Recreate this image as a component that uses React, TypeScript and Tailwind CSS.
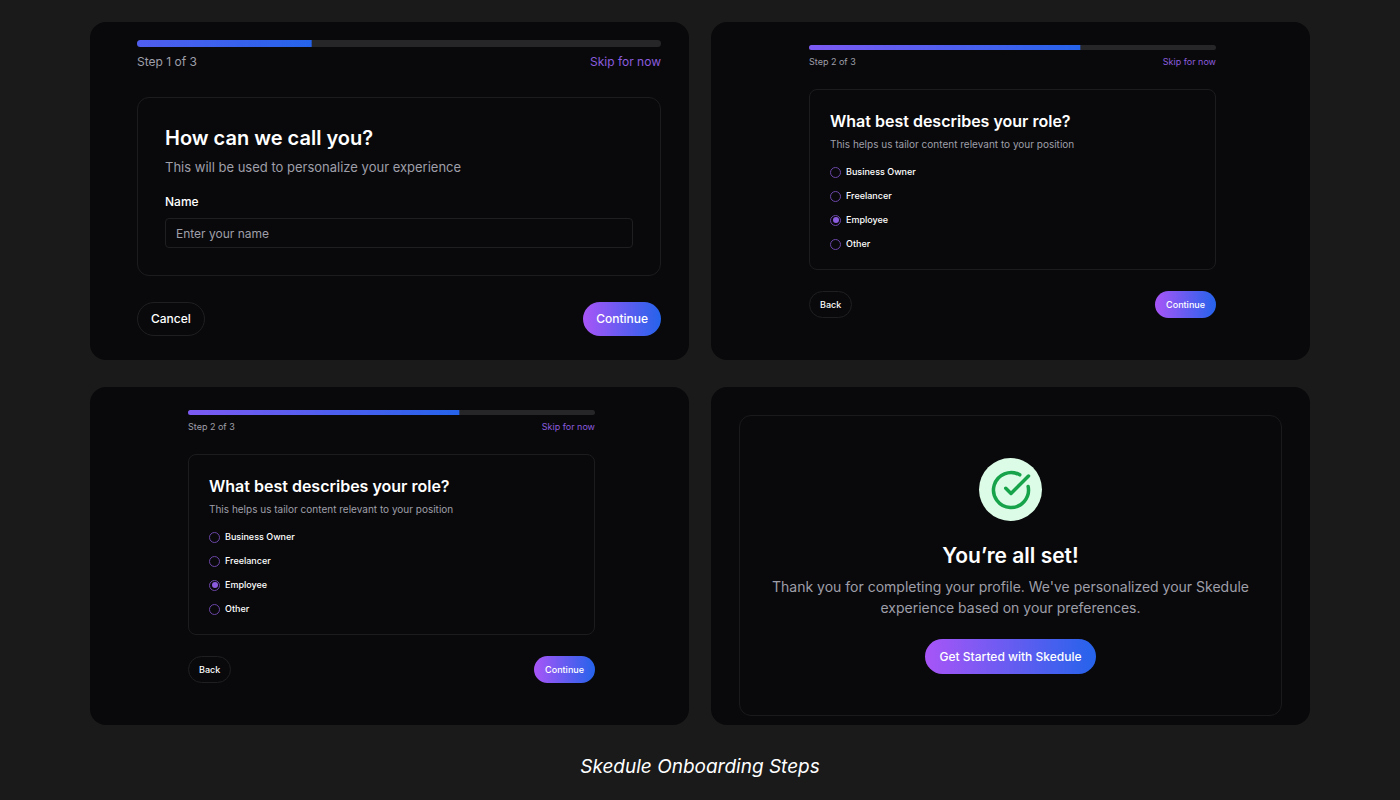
import clsx from "clsx";
import { CircleCheckBig } from "lucide-react";
import { useId, useState, type ReactNode } from "react";

type Size = "sm" | "md";

type StepHeaderProps = {
  step: number;
  total: number;
  size: Size;
};

type ButtonProps = {
  children: ReactNode;
  size: Size | "lg";
};

const roles = ["Business Owner", "Freelancer", "Employee", "Other"];

const Panel = ({ children, className }: { children: ReactNode; className: string }) => {
  return <section className={clsx("min-h-[338px] rounded-2xl bg-zinc-950", className)}>{children}</section>;
};

const StepHeader = ({ step, total, size }: StepHeaderProps) => {
  const remaining = 100 - (step / total) * 100;

  return (
    <header>
      <div
        className={clsx("overflow-hidden rounded-full bg-[#262628]", size === "md" ? "h-[7px]" : "h-[5px]")}
        role="progressbar"
        aria-valuemin={0}
        aria-valuemax={total}
        aria-valuenow={step}>
        <div
          className="h-full bg-linear-to-r/srgb from-[#a855f7] to-[#2563eb]"
          style={{ transform: `translateX(-${remaining}%)` }}
        />
      </div>
      <div
        className={clsx(
          "flex items-center justify-between",
          size === "md" ? "mt-[5px] text-xs leading-5" : "mt-1 text-[9px] leading-4",
        )}>
        <span className="text-zinc-400">
          Step {step} of {total}
        </span>
        <a className="text-[#8b5cdf]" href="#skip">
          Skip for now
        </a>
      </div>
    </header>
  );
};

const PrimaryButton = ({ children, size }: ButtonProps) => {
  return (
    <button
      className={clsx(
        "rounded-full bg-linear-to-r/srgb from-[#a855f7] to-[#2563eb] font-medium text-white",
        size === "lg" && "h-[35px] px-[15px] text-xs",
        size === "md" && "h-[34px] px-[13px] text-xs",
        size === "sm" && "h-[27px] px-[11px] text-[9px]",
      )}
      type="button">
      {children}
    </button>
  );
};

const OutlineButton = ({ children, size }: ButtonProps) => {
  return (
    <button
      className={clsx(
        "rounded-full border border-[#1f1f22] font-medium text-white",
        size === "md" ? "h-[34px] px-[13px] text-xs" : "h-[27px] px-[10px] text-[9px]",
      )}
      type="button">
      {children}
    </button>
  );
};

const NameStep = () => {
  const [name, setName] = useState("");

  return (
    <Panel className="pt-[18px] pr-7 pl-[47px]">
      <StepHeader step={1} total={3} size="md" />

      <div className="mt-[25px] rounded-xl border border-[#1c1c1f] px-[27px] pt-[26px] pb-[27px]">
        <h2 className="text-xl leading-7 font-semibold text-white">How can we call you?</h2>
        <p className="mt-[5px] text-[13px] leading-5 text-zinc-400">This will be used to personalize your experience</p>

        <label className="mt-[17px] block text-xs leading-4 font-medium text-white" htmlFor="name">
          Name
        </label>
        <input
          className="mt-2 block h-[30px] w-full rounded border border-[#1f1f22] bg-transparent px-[10px] text-xs text-white outline-none placeholder:text-zinc-400"
          id="name"
          type="text"
          placeholder="Enter your name"
          value={name}
          onChange={(event) => setName(event.target.value)}
        />
      </div>

      <div className="mt-[26px] flex justify-between">
        <OutlineButton size="md">Cancel</OutlineButton>
        <PrimaryButton size="md">Continue</PrimaryButton>
      </div>
    </Panel>
  );
};

const RoleStep = () => {
  const [role, setRole] = useState("Employee");
  const groupId = useId();

  return (
    <Panel className="pt-[23px] pr-[94px] pl-[98px]">
      <StepHeader step={2} total={3} size="sm" />

      <div className="mt-[19px] rounded-lg border border-[#1c1c1f] px-5 pt-[19px] pb-[13px]">
        <h2 className="text-base leading-6 font-semibold text-white" id={`${groupId}-title`}>
          What best describes your role?
        </h2>
        <p className="mt-[3px] text-[10px] leading-4 text-zinc-400">
          This helps us tailor content relevant to your position
        </p>

        <div className="mt-2" role="radiogroup" aria-labelledby={`${groupId}-title`}>
          {roles.map((item) => (
            <label
              key={item}
              className="flex h-6 items-center gap-[5px] text-[9px] font-medium text-white"
              htmlFor={`${groupId}-${item}`}>
              <input
                className="grid size-[11px] appearance-none place-content-center rounded-full border border-[#6b46a8] before:size-[6px] before:rounded-full checked:before:bg-[#8b5cdf]"
                id={`${groupId}-${item}`}
                type="radio"
                name={groupId}
                value={item}
                checked={role === item}
                onChange={() => setRole(item)}
              />
              {item}
            </label>
          ))}
        </div>
      </div>

      <div className="mt-[21px] flex justify-between">
        <OutlineButton size="sm">Back</OutlineButton>
        <PrimaryButton size="sm">Continue</PrimaryButton>
      </div>
    </Panel>
  );
};

const DoneStep = () => {
  return (
    <Panel className="px-7 pt-7 pb-[9px]">
      <div className="flex flex-col items-center rounded-xl border border-[#1a1a1d] px-7 pt-[42px] pb-[41px] text-center">
        <div className="grid size-[63px] place-content-center rounded-full bg-[#dcfce7]">
          <CircleCheckBig className="size-[42px] text-[#16a34a]" />
        </div>
        <h2 className="mt-[21px] text-[21px] leading-7 font-semibold text-white">You’re all set!</h2>
        <p className="mt-[6px] mb-[21px] text-sm leading-[21px] text-zinc-400">
          Thank you for completing your profile. We've personalized your Skedule experience based on your preferences.
        </p>
        <PrimaryButton size="lg">Get Started with Skedule</PrimaryButton>
      </div>
    </Panel>
  );
};

export default function App() {
  return (
    <main className="min-h-screen bg-[#1a1a1a] px-[90px] pt-[22px] font-['Inter',sans-serif]">
      <div className="grid grid-cols-2 gap-x-[22px] gap-y-[27px]">
        <NameStep />
        <RoleStep />
        <RoleStep />
        <DoneStep />
      </div>
      <p className="mt-7 text-center text-[19px] leading-7 text-white italic">Skedule Onboarding Steps</p>
    </main>
  );
}
